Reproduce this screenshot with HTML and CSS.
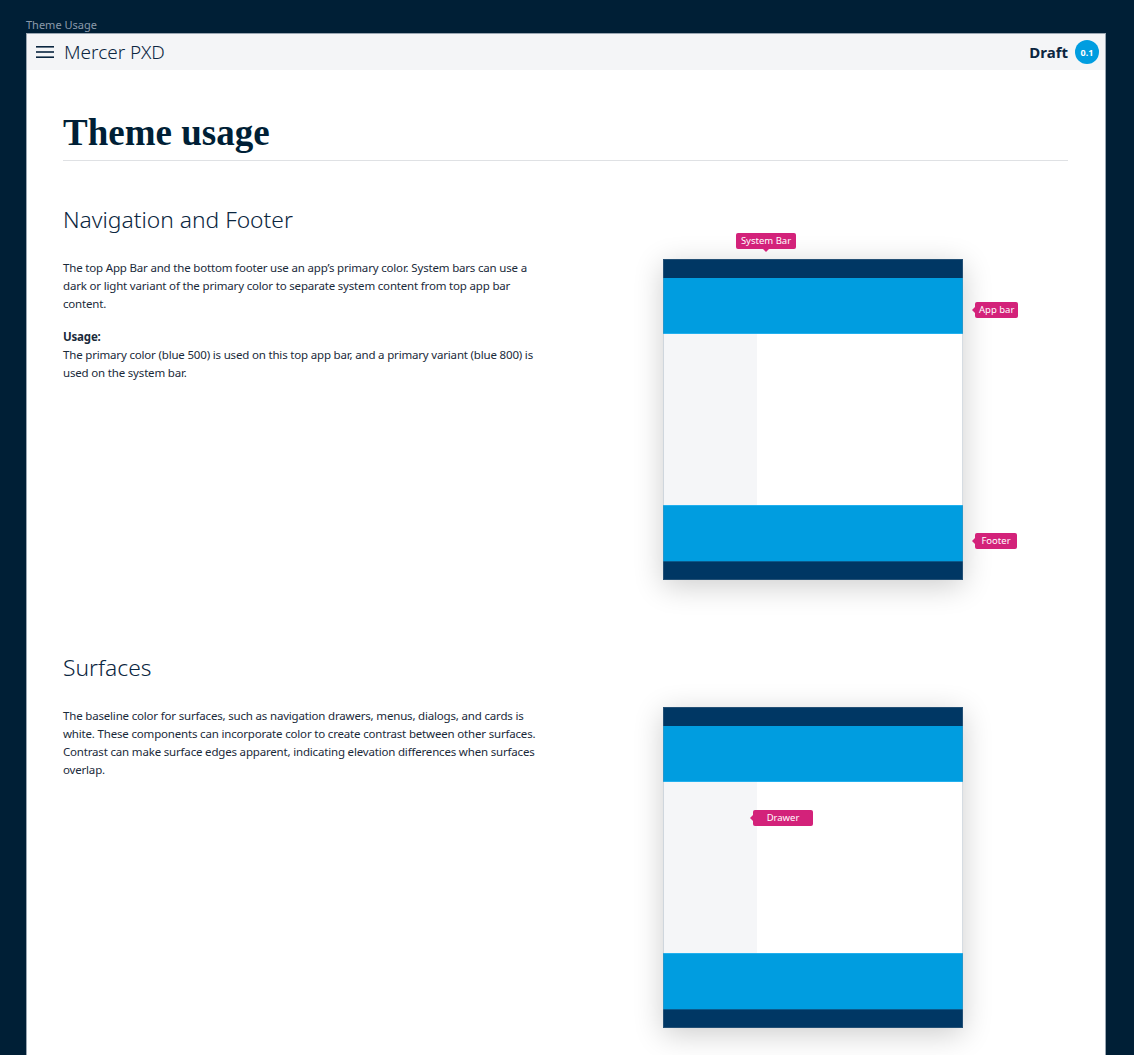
FILE: index.html
```html
<!DOCTYPE html>
<html lang="en">
<head>
<meta charset="utf-8">
<title>Theme Usage</title>
<link rel="stylesheet" href="styles.css">
</head>
<body>
<div class="caption">Theme Usage</div>
<div class="frame">
  <header class="topbar">
    <div class="brand">
      <svg class="menu-icon" width="18" height="14" viewBox="0 0 18 14" aria-hidden="true">
        <rect x="0" y="1" width="18" height="1.6" fill="#0b2640"/>
        <rect x="0" y="6.2" width="18" height="1.6" fill="#0b2640"/>
        <rect x="0" y="11.4" width="18" height="1.6" fill="#0b2640"/>
      </svg>
      <span class="brand-name">Mercer PXD</span>
    </div>
    <div class="status">
      <span class="draft">Draft</span>
      <span class="badge">0.1</span>
    </div>
  </header>

  <main class="content">
    <h1 class="page-title">Theme usage</h1>

    <section class="section">
      <h2 class="section-title">Navigation and Footer</h2>
      <div class="row">
        <div class="text">
          <p>The top App Bar and the bottom footer use an app’s primary color. System bars can use a dark or light variant of the primary color to separate system content from top app bar content.</p>
          <p><strong>Usage:</strong><br>The primary color (blue 500) is used on this top app bar, and a primary variant (blue 800) is used on the system bar.</p>
        </div>
        <div class="mock">
          <div class="sysbar"></div>
          <div class="appbar"></div>
          <div class="body"><div class="drawer"></div></div>
          <div class="footer"></div>
          <div class="sysbar bottom"></div>
          <span class="tag tag-down tag-system">System Bar</span>
          <span class="tag tag-left tag-appbar">App bar</span>
          <span class="tag tag-left tag-footer">Footer</span>
        </div>
      </div>
    </section>

    <section class="section">
      <h2 class="section-title">Surfaces</h2>
      <div class="row">
        <div class="text">
          <p>The baseline color for surfaces, such as navigation drawers, menus, dialogs, and cards is white. These components can incorporate color to create contrast between other surfaces. Contrast can make surface edges apparent, indicating elevation differences when surfaces overlap.</p>
        </div>
        <div class="mock">
          <div class="sysbar"></div>
          <div class="appbar"></div>
          <div class="body"><div class="drawer"></div></div>
          <div class="footer"></div>
          <div class="sysbar bottom"></div>
          <span class="tag tag-left tag-drawer">Drawer</span>
        </div>
      </div>
    </section>
  </main>
</div>
</body>
</html>
```

FILE: styles.css
```css
* { box-sizing: border-box; }

html, body {
  margin: 0;
  padding: 0;
  background: #001f36;
}

body {
  padding: 18px 0 0 26px;
  font-family: "Noto Sans", "Open Sans", sans-serif;
  color: #0b2640;
  height: 1055px;
  overflow: hidden;
}

.caption {
  font-size: 11px;
  line-height: 14px;
  color: #8b9aab;
  margin-bottom: 1px;
}

.frame {
  width: 1080px;
  min-height: 1100px;
  background: #ffffff;
  border: 1px solid #9aa6b2;
  border-bottom: none;
}

.topbar {
  height: 36px;
  background: #f4f5f7;
  display: flex;
  align-items: center;
  justify-content: space-between;
  padding: 0 6px 0 9px;
}

.brand {
  display: flex;
  align-items: center;
  gap: 10px;
}

.menu-icon { display: block; }

.brand-name {
  font-size: 19px;
  font-weight: 300;
  color: #0b2640;
}

.status {
  display: flex;
  align-items: center;
  gap: 7px;
}

.draft {
  font-size: 15px;
  font-weight: 700;
  color: #0b2640;
}

.badge {
  width: 24px;
  height: 24px;
  border-radius: 50%;
  background: #009de0;
  color: #fff;
  font-size: 9px;
  font-weight: 700;
  display: flex;
  align-items: center;
  justify-content: center;
}

.content {
  padding: 41px 37px 0 36px;
}

.page-title {
  margin: 0;
  font-family: "Liberation Serif", "DejaVu Serif", serif;
  font-weight: 700;
  font-size: 37px;
  line-height: 44px;
  color: #001f36;
  padding-bottom: 5px;
  border-bottom: 1px solid #dfe1e4;
}

.section {
  margin-top: 43px;
}

.section + .section {
  margin-top: 72px;
}

.section-title {
  margin: 0 0 23px;
  font-size: 22.8px;
  line-height: 32px;
  font-weight: 300;
  color: #0b2640;
}

.row {
  display: grid;
  grid-template-columns: 485px 300px;
  column-gap: 115px;
  align-items: start;
}

.text p {
  margin: 0 0 15px;
  font-size: 11.5px;
  line-height: 18px;
  letter-spacing: -0.18px;
  color: #1a2a3a;
}

.text strong { font-weight: 700; }

.mock {
  position: relative;
  width: 300px;
  height: 321px;
  display: flex;
  flex-direction: column;
  box-shadow: 0 6px 28px rgba(0, 0, 0, 0.2);
  outline: 1px solid rgba(120, 140, 160, 0.3);
  outline-offset: -1px;
}

.sysbar {
  height: 19px;
  background: #003764;
}

.sysbar.bottom {
  border-top: 1px solid #0b5a8c;
}

.appbar {
  height: 56px;
  background: #009de0;
  border-bottom: 1px solid #22b0ee;
}

.body {
  flex: 1;
  display: flex;
  background: #fff;
}

.drawer {
  width: 94px;
  background: #f5f6f8;
}

.footer {
  height: 56px;
  background: #009de0;
  border-top: 1px solid #22b0ee;
}

.tag {
  position: absolute;
  height: 16px;
  padding: 0 4px;
  background: #d3227a;
  color: #fff;
  font-size: 9.5px;
  line-height: 16px;
  border-radius: 2px;
  white-space: nowrap;
  text-align: center;
}

.tag::after {
  content: "";
  position: absolute;
  border: 3px solid transparent;
}

.tag-down::after {
  left: 50%;
  bottom: -6px;
  margin-left: -3px;
  border-top-color: #d3227a;
}

.tag-left::after {
  left: -6px;
  top: 50%;
  margin-top: -3px;
  border-right-color: #d3227a;
}

.tag-system { left: 73px; top: -26px; min-width: 60px; }
.tag-appbar { left: 312px; top: 43px; min-width: 42px; }
.tag-footer { left: 312px; top: 274px; min-width: 42px; }
.tag-drawer { left: 90px; top: 103px; min-width: 60px; }
```
